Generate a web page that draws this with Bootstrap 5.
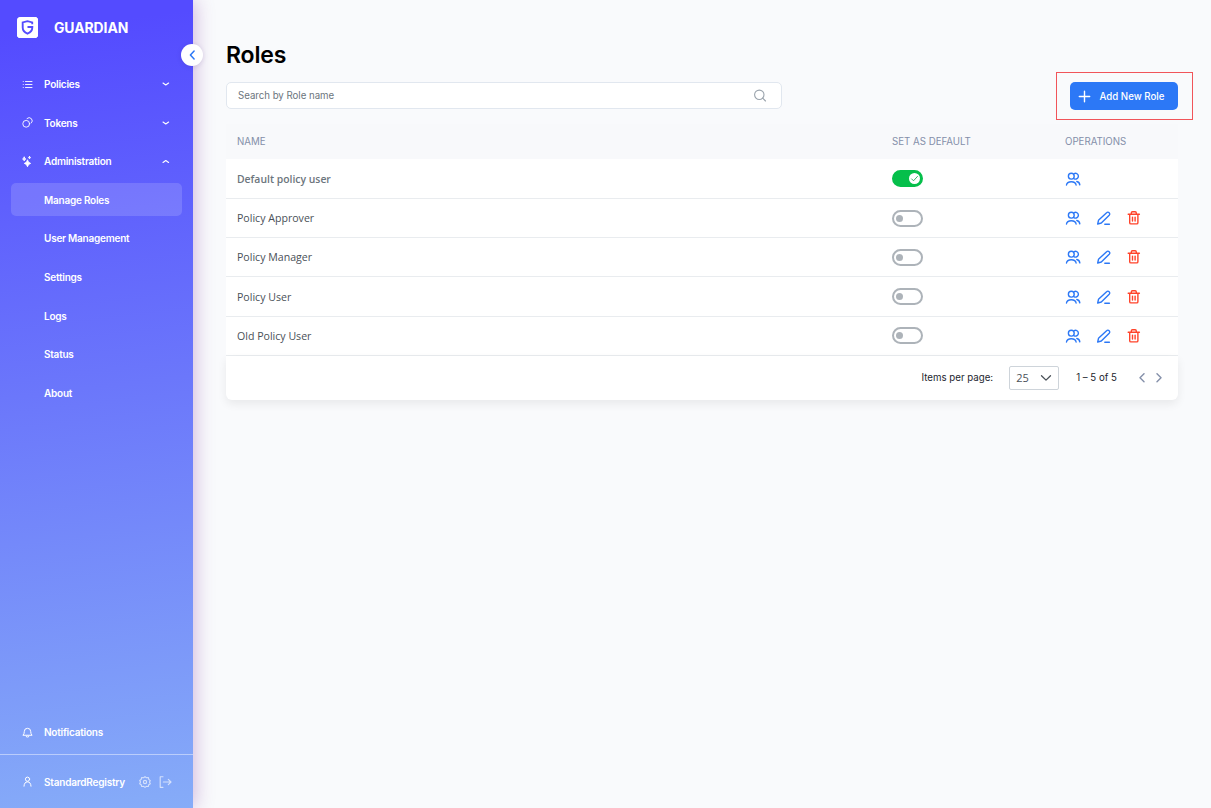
<!DOCTYPE html>
<html lang="en">
<head>
<meta charset="utf-8">
<meta name="viewport" content="width=device-width, initial-scale=1">
<title>Guardian - Roles</title>
<link href="https://cdn.jsdelivr.net/npm/bootstrap@5.3.0/dist/css/bootstrap.min.css" rel="stylesheet">
<style>
body{font-family:Inter,"Liberation Sans",sans-serif;background:#f9fafc;font-size:9.7px;line-height:12px;height:100vh;color:#23252e;overflow:hidden}
svg{display:block;flex:none;fill:none;stroke:currentColor;stroke-linecap:round;stroke-linejoin:round}
.side{width:193px;background:linear-gradient(173deg,#544bff 4%,#6b77fb 48%,#86acf8 100%);box-shadow:2px 0 18px rgba(115,30,150,.3);color:#fff;z-index:2}
.brand{height:55px;padding-left:17px;gap:16px;font-size:13.9px;font-weight:700;letter-spacing:-.05px}
.collapse-btn{position:absolute;left:181px;top:44px;width:22px;height:22px;color:#2c78f6;box-shadow:0 1px 5px rgba(60,30,120,.15)}
.menu{padding:12.5px 11px 0;gap:5.6px}
.item{height:33px;padding:0 11px;font-weight:600;font-size:10px;color:#fff;border-radius:5px;text-decoration:none;letter-spacing:-.23px}
.item .ico{width:22px}
.item.on{background:rgba(255,255,255,.15)}
.alerts{padding:0 11px 5.5px}
.foot{height:54px;border-top:1px solid rgba(255,255,255,.45);padding:0 21px 0 22px;font-weight:600;font-size:10px;letter-spacing:-.2px}
.foot .ico{width:22px}
.user-name{width:95px}
.page{padding:0 33px}
h1{font-size:23px;font-weight:600;color:#000;margin:43px 0 0;line-height:24px;letter-spacing:-.15px}
.search-area{height:120px}
.search{width:556px;height:27px;border:1px solid #e1e7ef;border-radius:5px;padding:0 14px 0 11px;color:#6c757d;margin-top:15px;letter-spacing:-.03px}
.callout{margin:5px -15px 0 0;width:137px;height:48px;border:1px solid #f1545a}
.add{width:108px;height:28px;background:#2c78f6;border-radius:5px;color:#fff;font-size:9.7px;font-weight:500;padding:0 0 0 8px;gap:9px;border:0;margin-right:2px}
.add span{padding-top:1px}
.grid{display:grid;grid-template-columns:655px 173px 1fr;align-items:center;padding-left:11px}
.head{height:35px;background:#f8f9fb;color:#848fa9;padding-top:1px;margin-top:4px}
.line{height:39.3px;background:#fff;border-bottom:1px solid #e9ecef;font-family:"Open Sans","Noto Sans",sans-serif;font-size:10.6px;color:#495057;padding-top:.2px}
.line.strong{font-weight:600;color:#6c757d;font-size:10.4px;height:39.8px;padding-top:.6px}
.ops{gap:14.5px}
.sw{width:31px;height:17px;border-radius:9px;border:2px solid #adb3b9;padding-left:2.3px}
.sw i{width:7px;height:7px;border-radius:50%;background:#adb3b9}
.sw.yes{background:#06bf4b;border-color:#06bf4b;padding-left:14.5px}
.sw.yes i{width:11px;height:11px;background:#fff;color:#06a544}
.pager{height:44.5px;background:#fff;border-radius:0 0 6px 6px;box-shadow:0 4px 10px rgba(0,0,0,.07);padding-right:15px}
.size{width:50px;height:24px;border:1px solid #ced4da;border-radius:2px;padding:0 6px 0 6px;margin:0 17px 0 16px;font-family:"Open Sans",sans-serif;font-size:11px;color:#495057}
.prev{margin-left:21px}.next{margin-left:9px}.exit{margin-left:8px}
</style>
</head>
<body class="d-flex">
<svg width="0" height="0" class="position-absolute">
<symbol id="users" viewBox="0 0 16 16"><circle cx="6.300" cy="5.200" r="2.900"/><path d="M1.500 14c.3-2.200 2-3.200 4.800-3.200s4.500 1 4.800 3.200M9.200 2.600a2.900 2.900 0 1 1 0 5.200M11.800 10.500c1.800.4 2.800 1.500 3 3.400"/></symbol>
<symbol id="pen" viewBox="0 0 16 16"><path d="M1.700 14l.8-3.700 8.100-7.600a1.700 1.700 0 0 1 2.600 2.500L5.300 13zM8.800 14.200h4.600"/></symbol>
<symbol id="bin" viewBox="0 0 16 16"><path d="M2.200 4.200h11.200M3.700 4.200V12.700q0 1.200 1.200 1.200h5.800q1.200 0 1.200-1.200V4.200M5.300 4V2.900q0-1.200 1.200-1.200h2.600q1.200 0 1.200 1.200v1.100M6.500 7.100v3.900M9.100 7.100v3.900"/></symbol>
<symbol id="down" viewBox="0 0 10 10"><path d="M2 4l2.800 2L7.600 4"/></symbol>
</svg>

<aside class="side position-relative d-flex flex-column flex-shrink-0">
 <div class="brand d-flex align-items-center">
  <svg width="21" height="21" viewBox="0 0 21 21" stroke="none"><rect width="21" height="21" rx="4" fill="#fff"/><path d="M15.200 7.200V5.400L10.500 4.200 5.700 5.400v5q0 4.200 4.800 6.200 4.800-2 4.800-6.200V10H10.500" fill="none" stroke="#554cff" stroke-width="1.900" stroke-linecap="butt" stroke-linejoin="miter"/></svg>
  <span>GUARDIAN</span>
 </div>
 <button class="collapse-btn btn p-0 border-0 bg-white rounded-circle d-flex align-items-center justify-content-center" aria-label="Collapse"><svg width="12" height="12" viewBox="0 0 12 12" stroke-width="1.500"><path d="M8.100 2L4.400 6l3.700 4"/></svg></button>
 <nav class="menu d-flex flex-column">
  <a class="item d-flex align-items-center"><span class="ico"><svg width="11" height="11" viewBox="0 0 11 11" stroke-width=".9"><path d="M3.500 2.500h6.500M3.500 5.500h6.500M3.500 8.500h6.500M1.200 2.500h.1M1.200 5.500h.1M1.200 8.500h.1"/></svg></span><span class="flex-grow-1">Policies</span><svg width="10" height="10" stroke-width="1.100"><use href="#down"/></svg></a>
  <a class="item d-flex align-items-center"><span class="ico"><svg width="11" height="11" viewBox="0 0 11 11" stroke-width=".9"><circle cx="4.200" cy="6.800" r="3.400"/><path d="M5 1.500a3.100 3.100 0 1 1 4.200 4.600"/></svg></span><span class="flex-grow-1">Tokens</span><svg width="10" height="10" stroke-width="1.100"><use href="#down"/></svg></a>
  <a class="item d-flex align-items-center"><span class="ico"><svg width="11" height="11" viewBox="0 0 11 11" stroke="none"><path fill="#fff" d="M5.500 4.200q.5 2.700 3.100 3.200-2.600.5-3.100 3.300-.5-2.800-3.100-3.300 2.600-.5 3.100-3.200zM2.200 1.200q.3 1.500 1.600 1.800-1.300.3-1.600 1.800-.3-1.500-1.600-1.800 1.300-.3 1.600-1.800zM7.500.5q.2.900 1 1.100-.8.200-1 1.100-.2-.9-1-1.100.8-.2 1-1.100z"/></svg></span><span class="flex-grow-1">Administration</span><svg width="10" height="10" viewBox="0 0 10 10" stroke-width="1.100"><path d="M2 6.500l2.800-2 2.800 2"/></svg></a>
  <a class="item on d-flex align-items-center"><span class="ico"></span>Manage Roles</a>
  <a class="item d-flex align-items-center"><span class="ico"></span>User Management</a>
  <a class="item d-flex align-items-center"><span class="ico"></span>Settings</a>
  <a class="item d-flex align-items-center"><span class="ico"></span>Logs</a>
  <a class="item d-flex align-items-center"><span class="ico"></span>Status</a>
  <a class="item d-flex align-items-center"><span class="ico"></span>About</a>
 </nav>
 <div class="alerts mt-auto"><a class="item d-flex align-items-center"><span class="ico"><svg width="11" height="11" viewBox="0 0 11 11" stroke-width="1"><path d="M1.200 8q1.100-1 1.100-3.500a3.200 3.200 0 0 1 6.400 0q0 2.500 1.100 3.500zM4.200 9.700q1.300.9 2.600 0"/></svg></span>Notifications</a></div>
 <div class="foot d-flex align-items-center">
  <span class="ico flex-shrink-0"><svg width="11" height="11" viewBox="0 0 11 11" stroke-width="1"><circle cx="5.500" cy="3.200" r="2.100"/><path d="M2 10.200q.2-4.300 3.500-4.300T9 10.200"/></svg></span>
  <span class="user-name flex-shrink-0">StandardRegistry</span>
  <svg width="12" height="12" viewBox="0 0 12 12" stroke-width="1.150" opacity=".65"><circle cx="6" cy="6" r="1.600"/><path d="M6 .6l1.400 1.100 2-.2.400 1.900 1.500 1.200L10.500 6l.8 1.700-1.500 1-.5 1.800-1.900-.1L6 11.400l-1.400-1-2 .1-.4-1.800-1.500-1L1.500 6 .7 4.500l1.500-1.100.4-1.900 2 .2z"/></svg>
  <svg class="exit" width="13" height="12" viewBox="0 0 13 12" stroke-width="1.150" opacity=".65"><path d="M4 .7H1.200v10.600H4M4.300 6h7.700M9.300 3.300L12 6 9.300 8.700"/></svg>
 </div>
</aside>

<main class="page flex-grow-1">
 <div class="d-flex justify-content-between align-items-end">
  <div class="search-area"><h1>Roles</h1>
   <div class="search d-flex align-items-center justify-content-between bg-white"><span>Search by Role name</span><svg width="14" height="14" viewBox="0 0 14 14" stroke-width="1.100" color="#9aa3ac"><circle cx="6.300" cy="5.800" r="4.700"/><path d="M9.700 9.200l2.800 2.800"/></svg></div>
  </div>
  <div class="callout d-flex align-items-center justify-content-center"><button class="add d-flex align-items-center"><svg width="13" height="13" viewBox="0 0 13 13" stroke-width="1.400"><path d="M1.300 6.500h10.400M6.500 1.300v10.400"/></svg><span>Add New Role</span></button></div>
 </div>
 <div id="roles"></div>
 <div class="pager d-flex align-items-center justify-content-end">
  <span>Items per page:</span>
  <div class="size d-flex align-items-center justify-content-between"><span>25</span><svg width="12" height="12" viewBox="0 0 12 12" stroke-width="1.300"><path d="M1.500 3.700L6 8.100l4.500-4.400"/></svg></div>
  <span>1 – 5 of 5</span>
  <svg class="prev" width="8" height="10" viewBox="0 0 8 10" stroke-width="1.400" color="#848fa9"><path d="M6 .7L2 4.700l4 4"/></svg>
  <svg class="next" width="8" height="10" viewBox="0 0 8 10" stroke-width="1.400" color="#848fa9"><path d="M2 .7l4 4-4 4"/></svg>
 </div>
</main>
<script src="https://cdn.jsdelivr.net/npm/bootstrap@5.3.0/dist/js/bootstrap.bundle.min.js"></script>
<script>
const icon=(id,c)=>`<svg width="16" height="16" stroke-width="1.4" color="${c}"><use href="#${id}"/></svg>`;
const roles=["Default policy user","Policy Approver","Policy Manager","Policy User","Old Policy User"];
document.getElementById("roles").innerHTML=`<div class="grid head"><span>NAME</span><span>SET AS DEFAULT</span><span>OPERATIONS</span></div>`+
roles.map((r,i)=>`<div class="grid line ${i?"":"strong"}"><span>${r}</span><span class="sw d-flex align-items-center ${i?"":"yes"}"><i class="d-block">${i?"":'<svg width="11" height="11" viewBox="0 0 11 11" stroke-width=".8"><path d="M2.600 5.900l1.900 1.900 4-4.400"/></svg>'}</i></span><div class="d-flex ops">${icon("users","#2c78f6")}${i?icon("pen","#2c78f6")+icon("bin","#ff432a"):""}</div></div>`).join("");
</script>
</body>
</html>
